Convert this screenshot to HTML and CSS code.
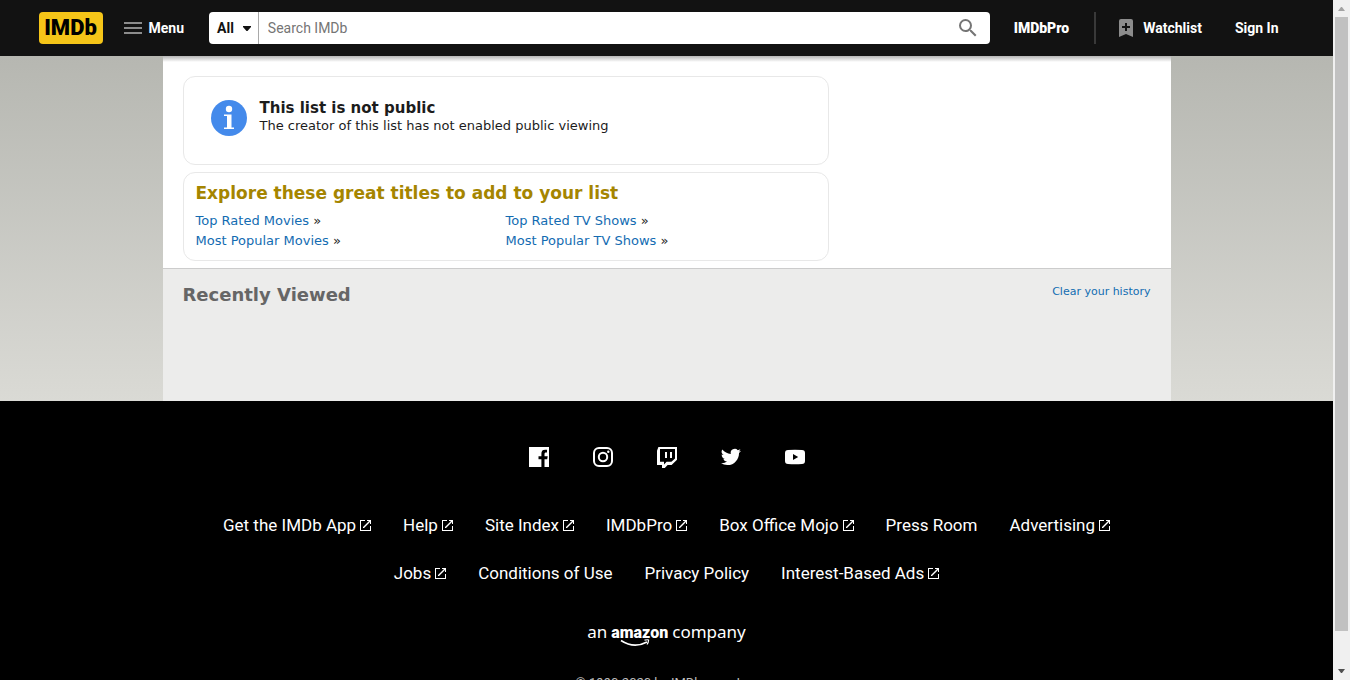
FILE: index.html
```
<!DOCTYPE html>
<html lang="en">
<head>
<meta charset="utf-8">
<title>IMDb</title>
<link rel="stylesheet" href="styles.css">
</head>
<body>
<svg class="sprite" aria-hidden="true">
  <symbol id="launch" viewBox="0 0 11 11"><path fill="currentColor" d="M5 0v1H1v9h9V6h1v5H0V0zM7 0h4v4h-1V2L4 8H3V7l6-6H7z"/></symbol>
</svg>
<div class="window">
  <div class="page">
    <header class="header">
      <nav class="nav">
        <a class="logo" href="#">IMDb</a>
        <button class="menu" type="button">
          <svg width="18" height="12" viewBox="0 0 18 12" aria-hidden="true"><path fill="#8c8c8c" d="M0 0h18v2H0zM0 5h18v2H0zM0 10h18v2H0z"/></svg>
          Menu
        </button>
        <form class="search">
          <button class="category" type="button">All
            <svg width="8" height="5" viewBox="0 0 8 5" aria-hidden="true"><path fill="#121212" d="M0 0h8v1L4.500 5h-1L0 1z"/></svg>
          </button>
          <input class="query" type="text" placeholder="Search IMDb" aria-label="Search IMDb">
          <button class="submit" type="button" aria-label="Submit search">
            <svg width="24" height="24" viewBox="0 0 24 24" aria-hidden="true"><path fill="#757575" d="M15.500 14h-.79l-.28-.27A6.471 6.471 0 0 0 16 9.500 6.500 6.500 0 1 0 9.500 16c1.610 0 3.090-.59 4.230-1.570l.27.28v.79l5 4.990L20.490 19l-4.990-5zm-6 0C7.010 14 5 11.990 5 9.500S7.010 5 9.500 5 14 7.010 14 9.500 11.990 14 9.500 14z"/></svg>
          </button>
        </form>
        <a class="pro" href="#">IMDbPro</a>
        <span class="divider"></span>
        <a class="watchlist" href="#">
          <svg width="14" height="18" viewBox="0 0 14 18" aria-hidden="true"><path fill="#8c8c8c" d="M2 0h10q2 0 2 2v16l-7-3-7 3V2q0-2 2-2z"/><path fill="#121212" d="M6 4h2v3h3v2H8v3H6V9H3V7h3z"/></svg>
          Watchlist
        </a>
        <a class="signin" href="#">Sign In</a>
      </nav>
    </header>
    <div class="backdrop">
      <main class="content">
        <div class="lists">
          <section class="card notice">
            <svg width="36" height="38" viewBox="0 -2 36 38" aria-hidden="true"><circle cx="18" cy="17" r="18" fill="#448aeb"/><circle cx="18" cy="8" r="3.200" fill="#fff"/><path fill="#fff" d="M13 13.500h7.500v13H23V28H13v-1.500h3V15h-3z"/></svg>
            <div>
              <h1 class="notice-title">This list is not public</h1>
              <p class="notice-text">The creator of this list has not enabled public viewing</p>
            </div>
          </section>
          <section class="card explore">
            <h2 class="explore-title">Explore these great titles to add to your list</h2>
            <div class="titles">
              <span><a href="#">Top Rated Movies</a> »</span>
              <span><a href="#">Top Rated TV Shows</a> »</span>
              <span><a href="#">Most Popular Movies</a> »</span>
              <span><a href="#">Most Popular TV Shows</a> »</span>
            </div>
          </section>
        </div>
        <section class="recent">
          <h2 class="recent-title">Recently Viewed</h2>
          <a class="clear" href="#">Clear your history</a>
        </section>
      </main>
    </div>
    <footer class="footer">
      <div class="social">
        <a href="#" aria-label="Facebook"><svg width="24" height="24" viewBox="0 0 24 24"><path fill="#fff" d="M2 2h20v20h-4.500v-7.700h2.700l.5-3.100h-3.200V9.300c0-1 .4-1.700 1.700-1.700h.8V4.800c-4.400-.7-5.600.9-5.600 4v2.400h-2.900v3.100h2.900V22H2z"/></svg></a>
        <a href="#" aria-label="Instagram"><svg width="24" height="24" viewBox="0 0 24 24" fill="none" stroke="#fff" stroke-width="2"><rect x="3" y="3" width="18" height="18" rx="5"/><circle cx="12" cy="12" r="4.200"/><circle cx="17.300" cy="6.700" r="1.200" fill="#fff" stroke="none"/></svg></a>
        <a href="#" aria-label="Twitch"><svg width="24" height="24" viewBox="0 0 24 24"><path fill="#fff" fill-rule="evenodd" d="M3.400 2H22v12.800L16.600 20h-4L9.800 23H7v-3H2V5.700zM5 4v12.800h4v2.600l2.600-2.600h4.800L20 13.400V4zM10 7h2v6h-2zM15 7h2v6h-2z"/></svg></a>
        <a href="#" aria-label="Twitter"><svg width="24" height="24" viewBox="0 0 24 24"><path fill="#fff" d="M8.300 20.100c7.500 0 11.700-6.300 11.700-11.700v-.5a8.300 8.300 0 0 0 2-2.100 8.200 8.200 0 0 1-2.400.6 4.100 4.100 0 0 0 1.800-2.200 8.200 8.200 0 0 1-2.600 1 4.100 4.100 0 0 0-7 3.700 11.600 11.600 0 0 1-8.500-4.300 4.100 4.100 0 0 0 1.300 5.500 4 4 0 0 1-1.900-.5v.1a4.100 4.100 0 0 0 3.300 4 4.100 4.100 0 0 1-1.800.1 4.100 4.100 0 0 0 3.800 2.800A8.200 8.200 0 0 1 2 18.300a11.600 11.600 0 0 0 6.300 1.800z"/></svg></a>
        <a href="#" aria-label="YouTube"><svg width="24" height="24" viewBox="0 0 24 24"><path fill="#fff" fill-rule="evenodd" d="M5 5q7-.5 14 0 3 .2 3 3v8q0 2.800-3 3-7 .5-14 0-3-.2-3-3V8q0-2.800 3-3zm5 4v6l5.200-3z"/></svg></a>
      </div>
      <div class="links">
        <a href="#">Get the IMDb App<svg class="out"><use href="#launch"/></svg></a>
        <a href="#">Help<svg class="out"><use href="#launch"/></svg></a>
        <a href="#">Site Index<svg class="out"><use href="#launch"/></svg></a>
        <a href="#">IMDbPro<svg class="out"><use href="#launch"/></svg></a>
        <a href="#">Box Office Mojo<svg class="out"><use href="#launch"/></svg></a>
        <a href="#">Press Room</a>
        <a href="#">Advertising<svg class="out"><use href="#launch"/></svg></a>
      </div>
      <div class="links">
        <a href="#">Jobs<svg class="out"><use href="#launch"/></svg></a>
        <a href="#">Conditions of Use</a>
        <a href="#">Privacy Policy</a>
        <a href="#">Interest-Based Ads<svg class="out"><use href="#launch"/></svg></a>
      </div>
      <div class="company">
        <span>an</span>
        <span class="amazon">amazon<svg class="smile" width="30" height="8" viewBox="0 0 30 8" fill="none" stroke="#fff" aria-hidden="true"><path stroke-width="1.600" d="M1 1.500q13 8.500 26 1.500"/><path stroke-width="1.200" d="M24.500 1.200q5-1 4 .3 0 2-1.500 4"/></svg></span>
        <span>company</span>
      </div>
      <p class="copyright">© 1990-2020 by IMDb.com, Inc.</p>
    </footer>
  </div>
  <div class="scrollbar" aria-hidden="true">
    <svg width="7" height="4" viewBox="0 0 7 4"><path fill="#a3a3a3" d="M3 0h1l3 4H0z"/></svg>
    <span class="thumb"></span>
    <svg width="7" height="4" viewBox="0 0 7 4"><path fill="#505050" d="M3 4h1l3-4H0z"/></svg>
  </div>
</div>
</body>
</html>
```
FILE: styles.css
```
* { box-sizing: border-box; }
body { margin: 0; font-family: Verdana, "DejaVu Sans", sans-serif; font-size: 13px; color: #1c1c1c; }
h1, h2, p { margin: 0; }
a { color: #136cb2; text-decoration: none; }
button { border: 0; padding: 0; background: none; font: inherit; color: inherit; cursor: pointer; }
svg { display: block; flex: none; }
.sprite { position: absolute; width: 0; height: 0; }

.window { display: flex; height: 100vh; overflow: hidden; }
.page { flex: 1; min-width: 0; }

.header { background: #121212; font-family: Roboto, sans-serif; font-size: 14px; font-weight: 700; color: #fff; }
.nav { display: flex; align-items: center; max-width: 1256px; height: 56px; margin: 0 auto; }
.nav a { color: #fff; }
.nav .logo { width: 64px; height: 32px; border-radius: 4px; background: #f5c518; color: #000; font: 900 22px/32px Roboto, sans-serif; text-align: center; }
.menu { display: flex; align-items: center; gap: 7px; margin: 0 25px 0 21px; }
.search { flex: 1; display: flex; height: 32px; border-radius: 4px; background: #fff; overflow: hidden; color: #121212; }
.category { display: flex; align-items: center; gap: 9px; padding: 0 7px 0 8px; border-right: 1px solid #a9a9a9; }
.query { flex: 1; min-width: 0; border: 0; padding: 0 9px; outline: 0; font: 400 14px Roboto, sans-serif; }
.query::placeholder { color: #757575; }
.submit { display: flex; align-items: center; padding: 0 10px; }
.nav .pro { margin: 0 25px 0 24px; font: 900 14px/32px Roboto, sans-serif; }
.divider { width: 2px; height: 32px; background: #393939; }
.watchlist { display: flex; align-items: center; gap: 10px; margin-left: 23px; }
.signin { margin: 0 16px 0 33px; }

.backdrop { background: linear-gradient(#b6b7b1, #dadad5); }
.content { max-width: 1008px; margin: 0 auto; background: linear-gradient(#b4b4b4, #fff 6px); }
.lists { display: grid; gap: 7px; padding: 20px 342px 7px 20px; }
.card { height: 89px; border: 1px solid #e8e8e8; border-radius: 12px; }
.notice { display: flex; gap: 13px; padding: 22px 27px; }
.notice-title { font-size: 15px; line-height: 18px; }
.notice-text { line-height: 18px; }
.explore { padding: 8px 12px; }
.explore-title { font-size: 17px; line-height: 24px; color: #a58500; }
.titles { display: grid; grid-template-columns: 310px 1fr; margin-top: 6px; line-height: 20px; }
.recent { display: flex; justify-content: space-between; min-height: 133px; padding: 14px 20px; border-top: 1px solid #ccc; background: #ececeb; }
.recent-title { font-size: 18px; line-height: 24px; color: #666; }
.clear { font-size: 11px; line-height: 18px; }

.footer { padding-top: 44px; background: #000; color: #fff; font-family: Roboto, sans-serif; }
.footer a { color: #fff; }
.social { display: flex; justify-content: center; gap: 40px; margin-bottom: 32px; }
.links { display: flex; justify-content: center; gap: 32px; font-size: 17px; line-height: 48px; }
.links a { display: flex; align-items: center; gap: 4px; }
.out { width: 11px; height: 11px; }
.company { display: flex; justify-content: center; align-items: baseline; gap: 4px; margin-top: 23px; font: 400 17px/24px "Noto Sans", sans-serif; }
.amazon { position: relative; font: 900 16px/24px Roboto, sans-serif; }
.smile { position: absolute; left: 9px; top: 18px; }
.copyright { margin-top: 30px; font-size: 13px; line-height: 16px; text-align: center; color: #bcbcbc; }

.scrollbar { display: flex; flex-direction: column; align-items: center; width: 17px; padding: 7px 0; background: #f0f0f0; }
.thumb { width: 13px; height: 614px; margin: 6px 0 auto; background: #c1c1c1; }
```
